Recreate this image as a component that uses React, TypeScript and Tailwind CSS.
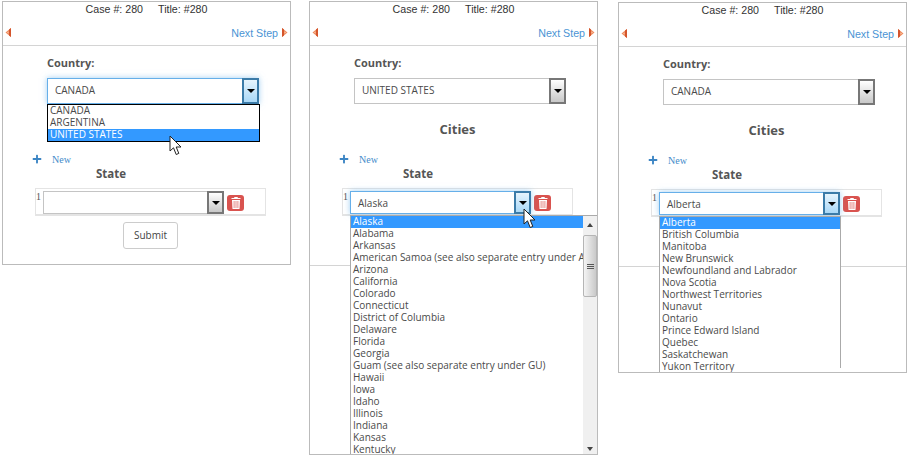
import React from "react";
import { FaPlus } from "react-icons/fa";

const usStates = [
  "Alaska",
  "Alabama",
  "Arkansas",
  "American Samoa (see also separate entry under AS)",
  "Arizona",
  "California",
  "Colorado",
  "Connecticut",
  "District of Columbia",
  "Delaware",
  "Florida",
  "Georgia",
  "Guam (see also separate entry under GU)",
  "Hawaii",
  "Iowa",
  "Idaho",
  "Illinois",
  "Indiana",
  "Kansas",
  "Kentucky",
];

const provinces = [
  "Alberta",
  "British Columbia",
  "Manitoba",
  "New Brunswick",
  "Newfoundland and Labrador",
  "Nova Scotia",
  "Northwest Territories",
  "Nunavut",
  "Ontario",
  "Prince Edward Island",
  "Quebec",
  "Saskatchewan",
  "Yukon Territory",
];

const Step = ({ flip }: { flip?: boolean }) => (
  <svg width="6" height="9" viewBox="0 0 6 9" className={flip ? "rotate-180" : ""}>
    <path d="M0 0 L5.5 4.5 L0 9 Z" fill="#ee8a5c" />
    <path d="M0 0 L2 1.6 L2 7.4 L0 9 Z" fill="#d4552c" />
    <path d="M2.5 3.4 L4 4.5 L2.5 5.6 Z" fill="#f9cdb0" />
  </svg>
);

const Trash = () => (
  <svg width="10" height="12" viewBox="0 0 10 12">
    <path d="M3.5 1 V0.5 H6.5 V1 M0.5 1.5 H9.5" stroke="#fff" strokeWidth="1" fill="none" />
    <path d="M1 3 H9 L8.5 12 H1.5 Z" fill="#fff" />
    <path d="M2.6 4 H3.6 V11 H2.6 Z M4.5 4 H5.5 V11 H4.5 Z M6.4 4 H7.4 V11 H6.4 Z" fill="#e58a87" />
  </svg>
);

const Cursor = ({ className }: { className: string }) => (
  <svg width="14" height="21" viewBox="0 0 14 21" className={className}>
    <path
      d="M1 1 L1 16 L4.5 12.8 L7.2 19.5 L9.8 18.4 L7.2 12 L12 12 Z"
      fill="#fff"
      stroke="#222"
      strokeWidth="1"
      strokeLinejoin="round"
    />
  </svg>
);

const Select = ({
  value,
  focused,
  widthClass,
  heightClass,
  textClass,
  children,
}: {
  value: string;
  focused?: boolean;
  widthClass: string;
  heightClass: string;
  textClass?: string;
  children?: React.ReactNode;
}) => (
  <div
    className={`relative flex ${widthClass} ${heightClass} border bg-white ${
      focused
        ? "border-[#66afe9] shadow-[0_0_6px_rgba(102,175,233,0.6)]"
        : "border-[#c4c4c4]"
    }`}
  >
    <span className={`flex-1 pl-[7px] text-[10px] leading-[20px] text-[#4a4a4a] self-center font-['Open_Sans',sans-serif] ${textClass ?? ""}`}>
      {value}
    </span>
    <div
      className={`w-[17px] -my-px -mr-px flex items-center justify-center border-2 ${
        focused
          ? "border-[#3b7ba8] bg-gradient-to-b from-[#e6f4fd] to-[#a9d8f7]"
          : "border-[#777] bg-gradient-to-b from-white to-[#c8c8c8]"
      }`}
    >
      <div className="size-0 border-x-[4px] border-t-[4px] border-x-transparent border-t-black" />
    </div>
    {children}
  </div>
);

const OptionList = ({
  items,
  selected,
  className,
  children,
}: {
  items: string[];
  selected: string;
  className: string;
  children?: React.ReactNode;
}) => (
  <ul className={`absolute z-10 bg-white overflow-hidden text-[10px] leading-[10px] text-[#4a4a4a] font-['Open_Sans',sans-serif] ${className}`}>
    {items.map((item) => (
      <li
        key={item}
        className={`pl-[2px] h-[12px] whitespace-nowrap overflow-x-clip ${
          item === selected ? "bg-[#3399ff] text-white" : ""
        }`}
      >
        {item}
      </li>
    ))}
    {children}
  </ul>
);

const Scrollbar = () => (
  <div className="absolute z-20 top-0 right-0 w-[14px] h-full bg-[#f0f0f0] flex flex-col items-center">
    <div className="mt-[7px] size-0 border-x-[3px] border-b-[4px] border-x-transparent border-b-[#444]" />
    <div className="mt-[8px] w-[14px] h-[62px] rounded-[2px] border border-[#b5b5b5] bg-gradient-to-r from-[#f4f4f4] to-[#c9c9c9] flex flex-col items-center justify-center gap-[1px]">
      <div className="w-[7px] h-px bg-[#555]" />
      <div className="w-[7px] h-px bg-[#555]" />
      <div className="w-[7px] h-px bg-[#555]" />
    </div>
    <div className="mt-auto mb-[4px] size-0 border-x-[3px] border-t-[4px] border-x-transparent border-t-[#444]" />
  </div>
);

const Panel = ({
  heightClass,
  offsetClass,
  country,
  countryFocused,
  countryOpen,
  cities,
  state,
  stateOpen,
  submit,
  cursorClass,
}: {
  heightClass: string;
  offsetClass?: string;
  country: string;
  countryFocused?: boolean;
  countryOpen?: boolean;
  cities?: boolean;
  state: string;
  stateOpen?: React.ReactNode;
  submit?: boolean;
  cursorClass: string | null;
}) => (
  <div className={`relative w-[289px] ${heightClass} ${offsetClass ?? ""} shrink-0 border border-[#bbb] overflow-hidden bg-white`}>
    <div className="h-[44px] border-b border-[#d4d4d4] font-['Liberation_Sans',sans-serif] text-[10.67px] text-[#333]">
      <div className="h-[14px] leading-[14px] flex justify-center gap-[15px]">
        <span>Case #: 280</span>
        <span>Title: #280</span>
      </div>
      <div className="mt-[10px] h-[14px] px-[2px] flex items-center justify-between">
        <span className="-mt-[2px]">
          <Step flip />
        </span>
        <span className="flex items-center gap-[4px] text-[#4a94d4]">
          Next Step
          <span className="-mt-[2px]">
            <Step />
          </span>
        </span>
      </div>
    </div>

    <div className="pl-[44px] pt-[9px]">
      <div className="h-[16px] leading-[16px] text-[11px] font-bold text-[#555] font-['Open_Sans',sans-serif]">
        Country:
      </div>
      <div className="mt-[7px]">
        <Select
          value={country}
          focused={countryFocused}
          widthClass="w-[212px]"
          heightClass="h-[26px]"
          textClass="pb-[2px]"
        >
          {countryOpen && (
            <OptionList
              items={["CANADA", "ARGENTINA", "UNITED STATES"]}
              selected="UNITED STATES"
              className="left-[-1px] top-[25px] w-[213px] border border-black"
            />
          )}
        </Select>
      </div>
    </div>

    <div className="mt-[15px] h-[20px] leading-[20px] pl-[8px] text-center text-[13px] font-bold text-[#555] font-['Open_Sans',sans-serif]">
      {cities ? "Cities" : ""}
    </div>

    <div className="mt-[13px] h-[14px] pl-[29px] flex items-center gap-[10px]">
      <FaPlus className="size-[10px] text-[#3c85c4]" />
      <span className="text-[10px] text-[#428bca] font-['Liberation_Serif',serif]">New</span>
    </div>

    <div className="mt-[1px] h-[14px] leading-[14px] pl-[93px] text-[11.5px] font-bold text-[#555] font-['Open_Sans',sans-serif]">
      State
    </div>

    <div className="mt-[7px] ml-[32px] w-[231px] h-[28px] border border-b-2 border-[#e4e4e4] pt-[2px] flex gap-[3px]">
      <span className="w-[4px] text-[10px] leading-[12px] text-[#555] font-['Liberation_Serif',serif]">1</span>
      <Select value={state} focused={!!stateOpen} widthClass="w-[181px]" heightClass="h-[23px]">
        {stateOpen}
      </Select>
      <button className="mt-[4px] w-[17px] h-[16px] rounded-[3px] bg-[#d9534f] flex items-center justify-center">
        <Trash />
      </button>
    </div>

    {submit ? (
      <button className="block mt-[6px] ml-[120px] w-[55px] h-[27px] rounded-[3px] border border-[#ccc] text-[10px] text-[#444] font-['Open_Sans',sans-serif]">
        Submit
      </button>
    ) : (
      <div className="mt-[49px] border-t border-[#d4d4d4]" />
    )}

    {cursorClass && <Cursor className={`absolute z-30 ${cursorClass}`} />}
  </div>
);

export default function App() {
  return (
    <div className="w-[911px] h-[456px] bg-white flex items-start pl-[2px] pt-px gap-[18px] overflow-hidden">
      <Panel
        heightClass="h-[264px]"
        country="CANADA"
        countryFocused
        countryOpen
        state=""
        submit
        cursorClass="left-[166px] top-[133px]"
      />
      <Panel
        heightClass="h-[454px]"
        country="UNITED STATES"
        cities
        state="Alaska"
        stateOpen={
          <OptionList
            items={usStates}
            selected="Alaska"
            className="left-[-1px] top-[23px] w-[247px] h-[240px] border-l border-t border-[#aaa] pr-[14px]"
          >
            <Scrollbar />
          </OptionList>
        }
        cursorClass="left-[213px] top-[206px]"
      />
      <Panel
        heightClass="h-[371px]"
        offsetClass="mt-px ml-[2px]"
        country="CANADA"
        cities
        state="Alberta"
        stateOpen={
          <OptionList
            items={provinces}
            selected="Alberta"
            className="left-[-1px] top-[23px] w-[182px] h-[156px] border-l border-t border-[#aaa]"
          >
            <div className="absolute right-0 top-0 w-px h-[151px] bg-[#aaa]" />
          </OptionList>
        }
        cursorClass={null}
      />
    </div>
  );
}
